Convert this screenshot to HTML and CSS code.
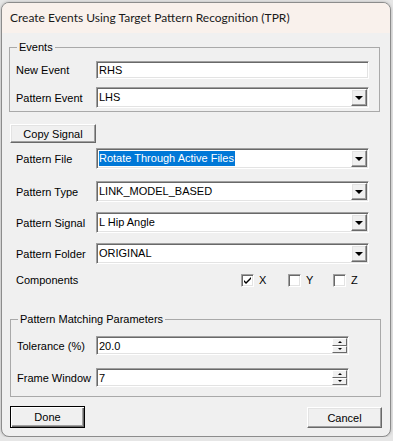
FILE: index.html
```html
<!DOCTYPE html>
<html lang="en">
<head>
    <meta charset="UTF-8">
    <meta name="viewport" content="width=device-width, initial-scale=1.0">
    <title>Create Events Using Target Pattern Recognition (TPR)</title>
    <link rel="stylesheet" href="styles.css">
</head>
<body>
    <div class="window">
        <div class="titlebar">Create Events Using Target Pattern Recognition (TPR)</div>

        <fieldset class="group events">
            <legend>Events</legend>
            <div class="row">
                <label>New Event</label>
                <div class="edit">RHS</div>
            </div>
            <div class="row combo-row">
                <label>Pattern Event</label>
                <div class="combo"><span class="value">LHS</span><span class="drop"></span></div>
            </div>
        </fieldset>

        <button class="btn copy">Copy Signal</button>

        <div class="fields">
            <div class="row field file">
                <label>Pattern File</label>
                <div class="combo"><span class="value"><span class="selected">Rotate Through Active Files</span></span><span class="drop"></span></div>
            </div>
            <div class="row field type">
                <label>Pattern Type</label>
                <div class="combo"><span class="value">LINK_MODEL_BASED</span><span class="drop"></span></div>
            </div>
            <div class="row field">
                <label>Pattern Signal</label>
                <div class="combo"><span class="value">L Hip Angle</span><span class="drop"></span></div>
            </div>
            <div class="row field">
                <label>Pattern Folder</label>
                <div class="combo"><span class="value">ORIGINAL</span><span class="drop"></span></div>
            </div>
            <div class="row components">
                <label>Components</label>
                <div class="check-item x">
                    <span class="checkbox">
                        <svg width="9" height="9" viewBox="0 0 9 9"><path d="M1 4 L3 6 L8 1 L8 3 L3 8 L1 6 Z" fill="#000"/></svg>
                    </span>X
                </div>
                <div class="check-item y"><span class="checkbox"></span>Y</div>
                <div class="check-item"><span class="checkbox"></span>Z</div>
            </div>
        </div>

        <fieldset class="group matching">
            <legend>Pattern Matching Parameters</legend>
            <div class="row spin-row">
                <label>Tolerance (%)</label>
                <div class="spinner">
                    <span class="value">20.0</span>
                    <span class="spin"><span class="up"></span><span class="down"></span></span>
                </div>
            </div>
            <div class="row spin-row frame">
                <label>Frame Window</label>
                <div class="spinner">
                    <span class="value">7</span>
                    <span class="spin"><span class="up"></span><span class="down"></span></span>
                </div>
            </div>
        </fieldset>

        <div class="actions">
            <button class="btn done">Done</button>
            <button class="btn cancel">Cancel</button>
        </div>
    </div>
</body>
</html>
```

FILE: styles.css
```css
* {
    box-sizing: border-box;
}

body {
    margin: 0;
    background: #e6e6e6;
    font-family: "Liberation Sans", Arial, sans-serif;
    font-size: 11px;
    color: #000;
}

.window {
    margin: 2px 0 0 1px;
    width: 390px;
    height: 435px;
    border: 1px solid #8c8c8c;
    border-radius: 8px;
    background: #f0f0f0;
    overflow: hidden;
    box-shadow: 0 0 3px rgba(0, 0, 0, 0.25);
}

.titlebar {
    height: 30px;
    line-height: 29px;
    padding-left: 8px;
    background: #f9f1ec;
    font-family: Lato, "Liberation Sans", sans-serif;
    font-size: 12px;
    color: #1a1a1a;
}

/* group boxes */
.group {
    margin: 0;
    min-width: 0;
    border: 1px solid #a9a9a9;
}

.group legend {
    padding: 0 2px;
    margin-left: 1px;
    line-height: 13px;
}

.events {
    margin: 8px 0 0 7px;
    width: 371px;
    padding: 0 9px 3px 6px;
}

.matching {
    margin: 26px 0 0 8px;
    width: 371px;
    padding: 0 9px 9px 6px;
}

.row {
    display: flex;
    align-items: center;
}

.row label {
    width: 80px;
    flex: none;
}

.events .row {
    margin-top: 7px;
}

.events .combo-row {
    margin-top: 8px;
}

/* sunken edit controls */
.edit, .combo, .spinner {
    display: flex;
    align-items: center;
    background: #fff;
    border: 1px solid;
    border-color: #a0a0a0 #fff #fff #a0a0a0;
    box-shadow: inset 1px 1px 0 #696969, inset -1px -1px 0 #e3e3e3;
}

.edit {
    width: 273px;
    height: 18px;
    padding-left: 2px;
}

.combo {
    width: 273px;
    height: 21px;
    padding: 1px;
}

.combo .value {
    flex: 1;
    padding-left: 1px;
    line-height: 17px;
}

.selected {
    background: #0078d7;
    color: #fff;
    padding: 1px 1px 2px 0;
}

.drop {
    width: 16px;
    height: 17px;
    display: flex;
    align-items: center;
    justify-content: center;
    background: #f0f0f0;
    border: 1px solid;
    border-color: #fff #696969 #696969 #fff;
    box-shadow: inset -1px -1px 0 #a0a0a0, inset 1px 1px 0 #e3e3e3;
}

.drop::after {
    content: "";
    border-left: 4px solid transparent;
    border-right: 4px solid transparent;
    border-top: 4px solid #000;
    margin-top: 1px;
}

/* buttons */
.btn {
    font-family: inherit;
    font-size: 11px;
    color: #000;
    background: #f0f0f0;
    border: 1px solid;
    border-color: #fff #696969 #696969 #fff;
    box-shadow: inset -1px -1px 0 #a0a0a0, inset 1px 1px 0 #e3e3e3;
    padding: 0;
}

.copy {
    display: block;
    margin: 12px 0 0 8px;
    width: 86px;
    height: 19px;
}

.fields {
    padding-left: 14px;
}

.field {
    margin-top: 10px;
}

.field.file {
    margin-top: 5px;
}

.field.type {
    margin-top: 12px;
}

/* components */
.components {
    margin-top: 9px;
    height: 14px;
}

.components label {
    width: 225px;
}

.check-item {
    display: flex;
    align-items: center;
    gap: 5px;
    width: 47px;
}

.check-item.y {
    width: 45px;
}

.checkbox {
    width: 13px;
    height: 13px;
    display: flex;
    align-items: center;
    justify-content: center;
    background: #fff;
    border: 1px solid;
    border-color: #a0a0a0 #fff #fff #a0a0a0;
    box-shadow: inset 1px 1px 0 #696969, inset -1px -1px 0 #e3e3e3;
}

/* spinners */
.spin-row {
    margin-top: 10px;
}

.spin-row.frame {
    margin-top: 13px;
}

.spin-row label {
    width: 79px;
}

.spinner {
    width: 253px;
    height: 19px;
    padding: 1px 1px 1px 2px;
}

.spinner .value {
    flex: 1;
}

.spin {
    display: flex;
    flex-direction: column;
    width: 15px;
    height: 15px;
}

.spin span {
    flex: 1;
    display: flex;
    align-items: center;
    justify-content: center;
    background: #f0f0f0;
    border: 1px solid;
    border-color: #fff #696969 #696969 #fff;
}

.spin .up::after {
    content: "";
    border-left: 2px solid transparent;
    border-right: 2px solid transparent;
    border-bottom: 2px solid #000;
}

.spin .down::after {
    content: "";
    border-left: 2px solid transparent;
    border-right: 2px solid transparent;
    border-top: 2px solid #000;
}

/* dialog buttons */
.actions {
    display: flex;
    justify-content: space-between;
    align-items: flex-start;
    margin-top: 9px;
    padding: 0 8px;
}

.done {
    width: 75px;
    height: 22px;
    border: 1px solid #000;
    box-shadow: inset 1px 1px 0 #fff, inset -1px -1px 0 #696969, inset -2px -2px 0 #a0a0a0;
}

.cancel {
    width: 75px;
    height: 21px;
    margin-top: 1px;
}
```
